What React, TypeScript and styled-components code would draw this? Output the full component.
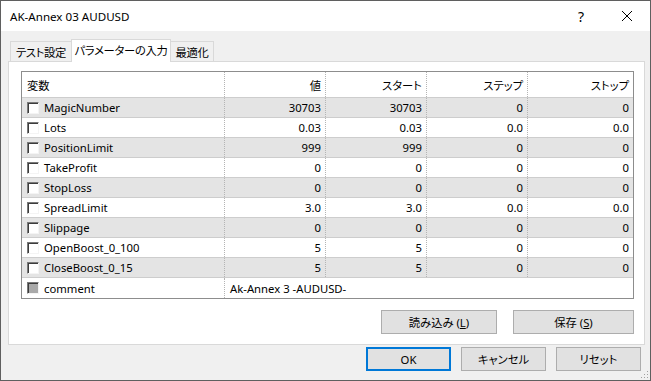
import React from 'react';
import styled, { createGlobalStyle } from 'styled-components';

const GlobalStyle = createGlobalStyle`
  html, body {
    margin: 0;
    padding: 0;
    background: #f0f0f0;
  }
  body {
    font-family: "Noto Sans", "Noto Sans CJK JP", sans-serif;
    font-size: 11.3px;
    font-feature-settings: "palt";
    color: #000;
  }
`;

const Window = styled.div`
  position: relative;
  width: 651px;
  height: 381px;
  box-sizing: border-box;
  border: 1px solid #5f5f5f;
  background: #f0f0f0;
  display: flex;
  flex-direction: column;
`;

const TitleBar = styled.div`
  height: 30px;
  flex: none;
  background: #fff;
  display: flex;
  align-items: center;
`;

const Title = styled.div`
  flex: 1;
  padding-left: 9px;
  font-size: 11.6px;
`;

const CaptionButton = styled.div`
  width: 46px;
  height: 30px;
  display: flex;
  align-items: center;
  justify-content: center;
  font-size: 14px;
`;

const Body = styled.div`
  flex: 1;
  display: flex;
  flex-direction: column;
  padding: 0 5px 9px 7px;
`;

const TabStrip = styled.div`
  display: flex;
  align-items: flex-end;
  height: 22px;
  margin: 8px 0 0 2px;
`;

const Tab = styled.div<{ $w: number; $active?: boolean }>`
  position: relative;
  z-index: ${p => (p.$active ? 1 : 0)};
  width: ${p => p.$w}px;
  height: ${p => (p.$active ? 23 : 20)}px;
  margin-bottom: ${p => (p.$active ? -1 : 0)}px;
  margin-left: -1px;
  box-sizing: border-box;
  border: 1px solid #d9d9d9;
  border-bottom: none;
  background: ${p => (p.$active ? '#fff' : '#f0f0f0')};
  display: flex;
  align-items: center;
  justify-content: center;
  white-space: nowrap;
  letter-spacing: -0.3px;
  padding-bottom: ${p => (p.$active ? 2 : 0)}px;
  &:first-child {
    margin-left: 0;
  }
`;

const Panel = styled.div`
  width: 637px;
  height: 284px;
  box-sizing: border-box;
  border: 1px solid #d9d9d9;
  background: #fff;
  padding: 9px 10px 10px 12px;
  display: flex;
  flex-direction: column;
`;

const Table = styled.div`
  width: 613px;
  height: 228px;
  box-sizing: border-box;
  border: 1px solid #8d8d8d;
  background: #fff;
`;

const Row = styled.div<{ $shade?: boolean; $head?: boolean }>`
  display: grid;
  grid-template-columns: 202px 101px 101px 101px 1fr;
  height: ${p => (p.$head ? 26 : 20)}px;
  box-sizing: border-box;
  border-bottom: 1px solid #cdcdcd;
  background: ${p => (p.$shade ? '#e4e4e4' : '#fff')};
  &:last-child {
    border-bottom: none;
  }
`;

const Cell = styled.div<{ $left?: boolean; $span?: boolean }>`
  display: flex;
  align-items: center;
  justify-content: ${p => (p.$left ? 'flex-start' : 'flex-end')};
  padding: ${p => (p.$left ? '0 0 0 5px' : '0 4px 0 0')};
  grid-column: ${p => (p.$span ? '2 / -1' : 'auto')};
  border-left: 1px dotted #b4b4b4;
  white-space: nowrap;
  overflow: hidden;
  &:first-child {
    border-left: none;
  }
`;

const NameCell = styled(Cell)`
  padding-left: 5px;
  gap: 5px;
`;

const CheckBox = styled.span<{ $disabled?: boolean }>`
  width: 12px;
  height: 12px;
  flex: none;
  box-sizing: border-box;
  border-top: 1px solid #7a7a7a;
  border-left: 1px solid #7a7a7a;
  border-right: 1px solid #f4f4f4;
  border-bottom: 1px solid #f4f4f4;
  box-shadow: inset 1px 1px 0 #3c3c3c;
  background: ${p => (p.$disabled ? '#a9a9a9' : '#fff')};
`;

const PanelButtons = styled.div`
  display: flex;
  justify-content: flex-end;
  gap: 16px;
  margin-top: 11px;
`;

const Button = styled.div<{ $w: number; $default?: boolean }>`
  width: ${p => p.$w}px;
  height: 24px;
  box-sizing: border-box;
  border: 1px solid ${p => (p.$default ? '#0078d7' : '#adadad')};
  box-shadow: ${p => (p.$default ? 'inset 0 0 0 1px #0078d7' : 'none')};
  background: #e1e1e1;
  display: flex;
  align-items: center;
  justify-content: center;
  white-space: nowrap;
`;

const BottomBar = styled.div`
  display: flex;
  justify-content: flex-end;
  gap: 10px;
  margin-top: 2px;
  padding-right: 4px;
`;

const Grip = styled.svg`
  position: absolute;
  right: 1px;
  bottom: 1px;
`;

type Param = { name: string; value: string; start: string; step: string; stop: string };

const params: Param[] = [
  { name: 'MagicNumber', value: '30703', start: '30703', step: '0', stop: '0' },
  { name: 'Lots', value: '0.03', start: '0.03', step: '0.0', stop: '0.0' },
  { name: 'PositionLimit', value: '999', start: '999', step: '0', stop: '0' },
  { name: 'TakeProfit', value: '0', start: '0', step: '0', stop: '0' },
  { name: 'StopLoss', value: '0', start: '0', step: '0', stop: '0' },
  { name: 'SpreadLimit', value: '3.0', start: '3.0', step: '0.0', stop: '0.0' },
  { name: 'Slippage', value: '0', start: '0', step: '0', stop: '0' },
  { name: 'OpenBoost_0_100', value: '5', start: '5', step: '0', stop: '0' },
  { name: 'CloseBoost_0_15', value: '5', start: '5', step: '0', stop: '0' },
];

const ParamRow: React.FC<{ param: Param; shade: boolean }> = ({ param, shade }) => (
  <Row $shade={shade}>
    <NameCell $left>
      <CheckBox />
      {param.name}
    </NameCell>
    <Cell>{param.value}</Cell>
    <Cell>{param.start}</Cell>
    <Cell>{param.step}</Cell>
    <Cell>{param.stop}</Cell>
  </Row>
);

const App: React.FC = () => {
  return (
    <>
      <GlobalStyle />
      <Window>
        <TitleBar>
          <Title>AK-Annex 03 AUDUSD</Title>
          <CaptionButton>?</CaptionButton>
          <CaptionButton>
            <svg width="10" height="10" viewBox="0 0 10 10">
              <path d="M0 0 L10 10 M10 0 L0 10" stroke="#000" strokeWidth="1" />
            </svg>
          </CaptionButton>
        </TitleBar>
        <Body>
          <TabStrip>
            <Tab $w={62}>テスト設定</Tab>
            <Tab $w={100} $active>パラメーターの入力</Tab>
            <Tab $w={44}>最適化</Tab>
          </TabStrip>
          <Panel>
            <Table>
              <Row $head>
                <Cell $left>変数</Cell>
                <Cell>値</Cell>
                <Cell>スタート</Cell>
                <Cell>ステップ</Cell>
                <Cell>ストップ</Cell>
              </Row>
              {params.map((p, i) => (
                <ParamRow key={p.name} param={p} shade={i % 2 === 0} />
              ))}
              <Row>
                <NameCell $left>
                  <CheckBox $disabled />
                  comment
                </NameCell>
                <Cell $left $span>Ak-Annex 3 -AUDUSD-</Cell>
              </Row>
            </Table>
            <PanelButtons>
              <Button $w={116}>読み込み (<u>L</u>)</Button>
              <Button $w={121}>保存 (<u>S</u>)</Button>
            </PanelButtons>
          </Panel>
          <BottomBar>
            <Button $w={85} $default>OK</Button>
            <Button $w={85}>キャンセル</Button>
            <Button $w={85}>リセット</Button>
          </BottomBar>
        </Body>
        <Grip width="10" height="10" viewBox="0 0 10 10">
          <rect x="8" y="2" width="1" height="1" fill="#a0a0a0" />
          <rect x="5" y="5" width="1" height="1" fill="#a0a0a0" />
          <rect x="8" y="5" width="1" height="1" fill="#a0a0a0" />
          <rect x="2" y="8" width="1" height="1" fill="#a0a0a0" />
          <rect x="5" y="8" width="1" height="1" fill="#a0a0a0" />
          <rect x="8" y="8" width="1" height="1" fill="#a0a0a0" />
        </Grip>
      </Window>
    </>
  );
};

export default App;
